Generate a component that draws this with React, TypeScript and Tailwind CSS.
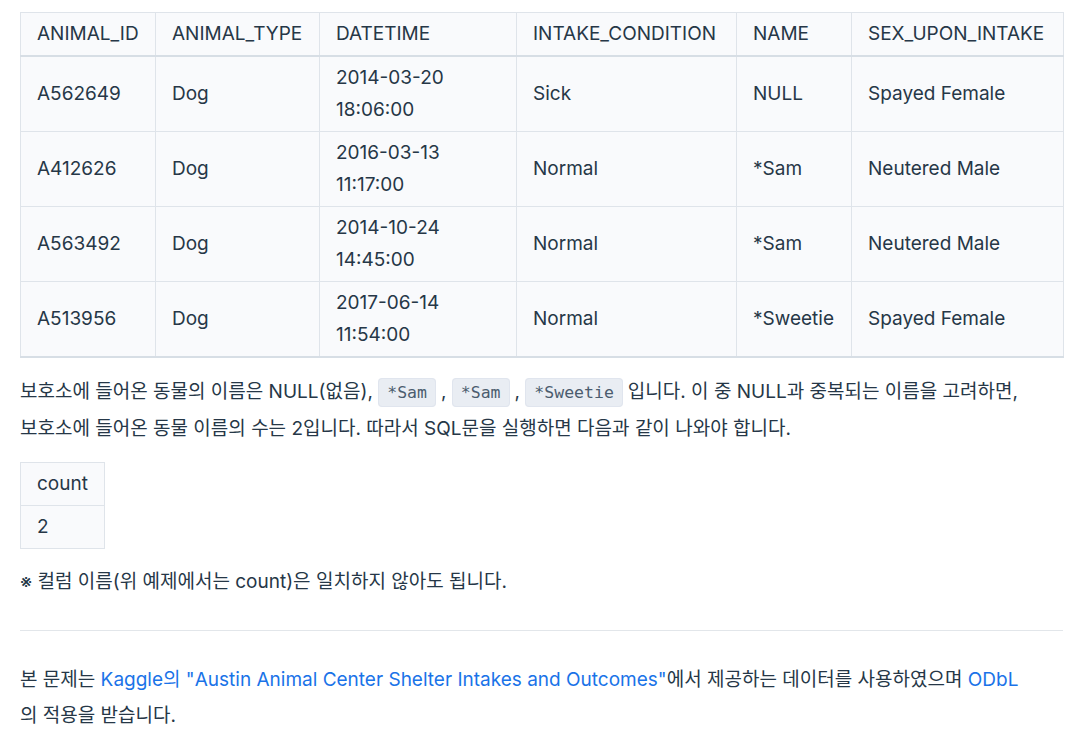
import * as React from "react"

const rows = [
  ["A562649", "Dog", "2014-03-20 18:06:00", "Sick", "NULL", "Spayed Female"],
  ["A412626", "Dog", "2016-03-13 11:17:00", "Normal", "*Sam", "Neutered Male"],
  ["A563492", "Dog", "2014-10-24 14:45:00", "Normal", "*Sam", "Neutered Male"],
  ["A513956", "Dog", "2017-06-14 11:54:00", "Normal", "*Sweetie", "Spayed Female"],
]

const headers = ["ANIMAL_ID", "ANIMAL_TYPE", "DATETIME", "INTAKE_CONDITION", "NAME", "SEX_UPON_INTAKE"]
const widths = ["w-[135px]", "w-[164px]", "w-[197px]", "w-[220px]", "w-[115px]", "w-[212px]"]

function Code({ children }: { children: React.ReactNode }) {
  return (
    <code className="mr-[5px] rounded-[4px] border border-[#e0e5ee] bg-[#e9edf3] px-[8px] py-[4px] font-['DejaVu_Sans_Mono',monospace] text-[16.5px] text-[#4b5c6e]">
      {children}
    </code>
  )
}

export default function App() {
  return (
    <div className="min-h-screen bg-white px-5 pt-3 font-['Inter','Noto_Sans_CJK_KR',sans-serif] text-[19px] leading-[36px] text-[#263747]">
      <table className="w-[1043px] table-fixed border-collapse border-b-2 border-[#d7dee5] bg-[#f9fafc]">
        <thead>
          <tr className="border-b-2 border-[#d7dee5]">
            {headers.map((h, i) => (
              <th
                key={h}
                className={`${widths[i]} border border-[#dfe4ea] px-4 py-[5px] text-left font-normal leading-[32px]`}
              >
                {h}
              </th>
            ))}
          </tr>
        </thead>
        <tbody>
          {rows.map((r) => (
            <tr key={r[0]} className="h-[75px]">
              {r.map((c, i) => (
                <td key={i} className="border border-[#dfe4ea] px-4 py-[5px] leading-[32px]">
                  {i === 2 ? (
                    <>
                      {c.split(" ")[0]}
                      <br />
                      {c.split(" ")[1]}
                    </>
                  ) : (
                    c
                  )}
                </td>
              ))}
            </tr>
          ))}
        </tbody>
      </table>

      <p className="mt-4">
        보호소에 들어온 동물의 이름은 NULL(없음), <Code>*Sam</Code>, <Code>*Sam</Code>, <Code>*Sweetie</Code>입니다. 이 중 NULL과 중복되는 이름을 고려하면,
        <br />
        보호소에 들어온 동물 이름의 수는 2입니다. 따라서 SQL문을 실행하면 다음과 같이 나와야 합니다.
      </p>

      <table className="mt-[15px] border-collapse bg-[#f9fafc]">
        <thead>
          <tr>
            <th className="w-[84px] border border-[#dfe4ea] px-4 py-[5px] text-left font-normal leading-[32px]">count</th>
          </tr>
        </thead>
        <tbody>
          <tr>
            <td className="border border-[#dfe4ea] px-4 py-[5px] leading-[32px]">2</td>
          </tr>
        </tbody>
      </table>

      <p className="mt-[15px]">※ 컬럼 이름(위 예제에서는 count)은 일치하지 않아도 됩니다.</p>

      <hr className="mt-[30px] w-[1043px] border-t border-[#e2e6ea]" />

      <p className="mt-[31px] w-[1043px]">
        본 문제는{" "}
        <a className="text-[#1a73e8]">Kaggle의 "Austin Animal Center Shelter Intakes and Outcomes"</a>에서 제공하는 데이터를 사용하였으며{" "}
        <a className="text-[#1a73e8]">ODbL</a>
        <br />의 적용을 받습니다.
      </p>
    </div>
  )
}
